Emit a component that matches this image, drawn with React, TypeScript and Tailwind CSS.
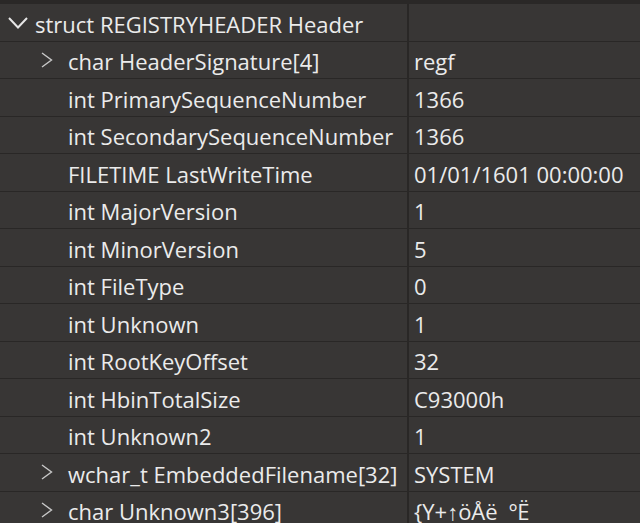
type Row = { name: string; value: string; expandable?: boolean };

const rows: Row[] = [
  { name: "char HeaderSignature[4]", value: "regf", expandable: true },
  { name: "int PrimarySequenceNumber", value: "1366" },
  { name: "int SecondarySequenceNumber", value: "1366" },
  { name: "FILETIME LastWriteTime", value: "01/01/1601 00:00:00" },
  { name: "int MajorVersion", value: "1" },
  { name: "int MinorVersion", value: "5" },
  { name: "int FileType", value: "0" },
  { name: "int Unknown", value: "1" },
  { name: "int RootKeyOffset", value: "32" },
  { name: "int HbinTotalSize", value: "C93000h" },
  { name: "int Unknown2", value: "1" },
  { name: "wchar_t EmbeddedFilename[32]", value: "SYSTEM", expandable: true },
  { name: "char Unknown3[396]", value: "{Y+↑öÅë  ºË", expandable: true },
];

function Expanded() {
  return (
    <svg width="20" height="12" viewBox="0 0 20 12" className="ml-[8px] mt-[2px] shrink-0">
      <polyline points="1,1 10,10.5 19,1" fill="none" stroke="#e6e6e6" strokeWidth="2" />
    </svg>
  );
}

function Collapsed() {
  return (
    <svg width="12" height="16" viewBox="0 0 12 16" className="shrink-0">
      <polyline points="1,1 10.5,8 1,15" fill="none" stroke="#c8c8c8" strokeWidth="1.4" />
    </svg>
  );
}

export default function App() {
  return (
    <div
      className="h-[523px] w-[640px] overflow-hidden bg-[#2a2827] pt-[4px] text-[22px] text-[#ebebeb]"
      style={{ fontFamily: '"Open Sans", "Noto Sans", sans-serif' }}
    >
      <div className="flex h-[37.5px] border-b border-[#292726] bg-[#383635]">
        <div className="flex w-[409px] items-center border-r-2 border-[#292726]">
          <Expanded />
          <span className="ml-[7px] mt-[3px] whitespace-nowrap leading-none">struct REGISTRYHEADER Header</span>
        </div>
        <div className="flex-1" />
      </div>
      {rows.map((row) => (
        <div key={row.name} className="flex h-[37.5px] border-b border-[#292726] bg-[#383635]">
          <div className="flex w-[409px] items-center border-r-2 border-[#292726]">
            <span className="flex w-[68px] justify-start pl-[41px]">
              {row.expandable ? <Collapsed /> : null}
            </span>
            <span className="mt-[3px] whitespace-nowrap leading-none">{row.name}</span>
          </div>
          <div className="flex flex-1 items-center pl-[5px]">
            <span className="mt-[3px] whitespace-pre leading-none">{row.value}</span>
          </div>
        </div>
      ))}
    </div>
  );
}
